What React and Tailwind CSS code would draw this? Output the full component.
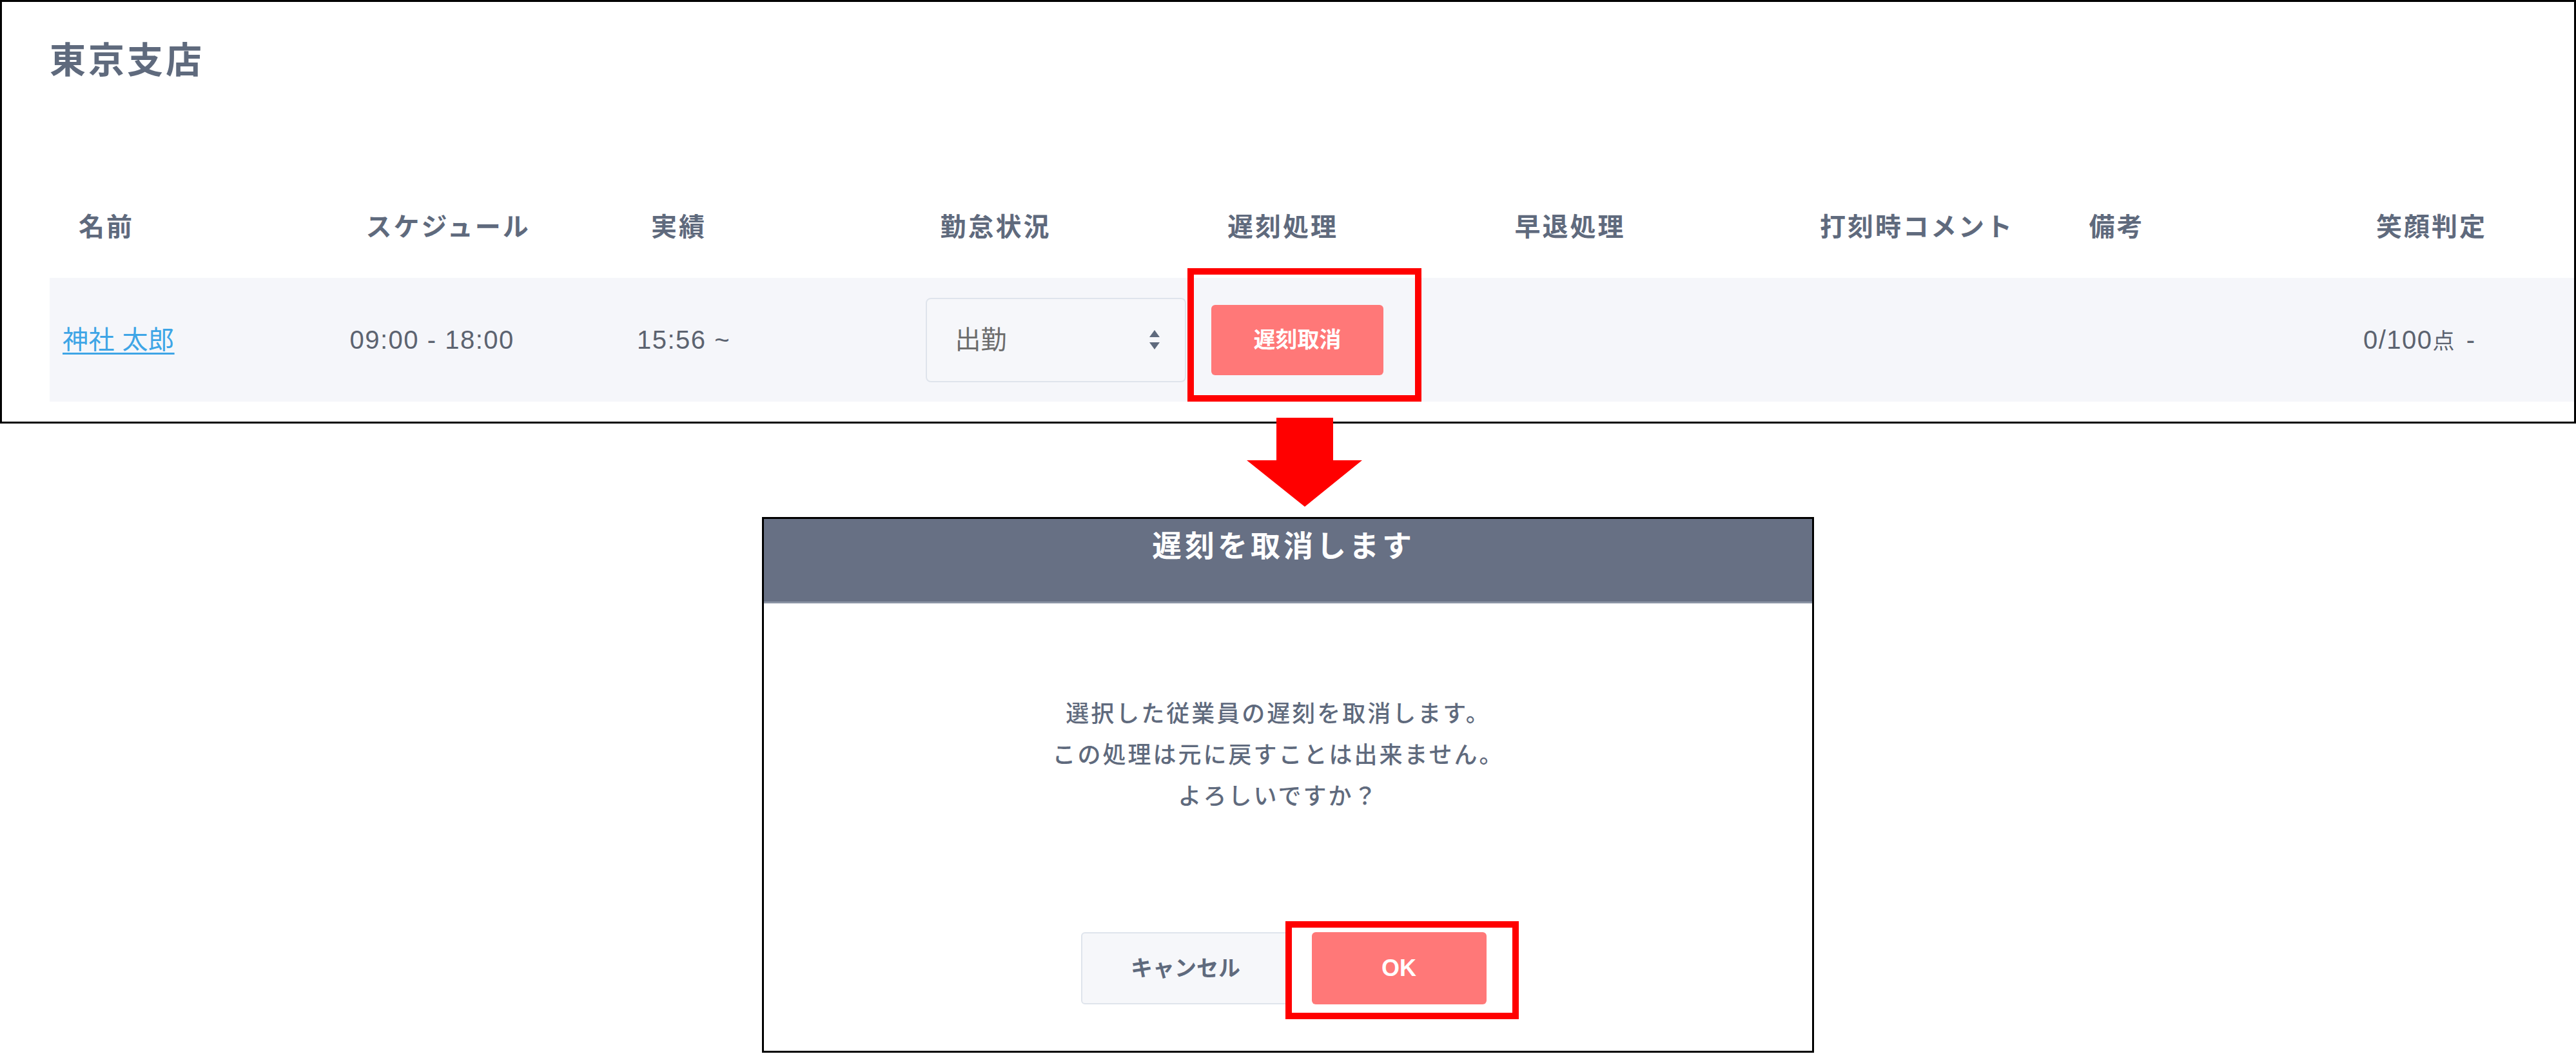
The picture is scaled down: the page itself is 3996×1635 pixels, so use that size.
export default function App() {
  const font = "font-['Liberation_Sans','Noto_Sans_CJK_JP',sans-serif]";
  const headers = [
    { t: "名前", c: "pl-[25px]" },
    { t: "スケジュール", c: "pl-[25px]" },
    { t: "実績", c: "pl-[22px]" },
    { t: "勤怠状況", c: "pl-[25px]" },
    { t: "遅刻処理", c: "pl-[25px]" },
    { t: "早退処理", c: "pl-[25px]" },
    { t: "打刻時コメント", c: "pl-[53px]" },
    { t: "備考", c: "pl-[25px]" },
    { t: "笑顔判定", c: "pl-[25px]" },
  ];
  return (
    <div className={`relative w-[3996px] h-[1635px] bg-white overflow-hidden ${font}`}>
      {/* Top panel */}
      <div className="h-[657px] border-[3px] border-black bg-white flex flex-col pl-[74px]">
        <div className="mt-[63px] h-[56px] leading-[56px] text-[56px] font-bold tracking-[4px] text-[#5f6a7d]">
          東京支店
        </div>
        <div className="mt-[200px] h-[60px] grid grid-cols-[repeat(8,445.5px)_1fr] items-center pl-[20px] text-[40px] leading-[60px] font-bold tracking-[3px] text-[#5f6a7d]">
          {headers.map((h) => (
            <div key={h.t} className={`${h.c} whitespace-nowrap`}>{h.t}</div>
          ))}
        </div>
        <div className="mt-[49px] h-[192px] bg-[#f5f6fa] grid grid-cols-[repeat(8,445.5px)_1fr] items-center pl-[20px] text-[40px]">
          <div>
            <a className="text-[#3ea5e6] underline underline-offset-[6px] decoration-[3px] tracking-[0.5px] leading-[48px]">神社 太郎</a>
          </div>
          <div className="text-[#5c6370] tracking-[1.5px]">09:00 - 18:00</div>
          <div className="text-[#5c6370] tracking-[1.5px]">15:56 ~</div>
          <div className="pl-[2px]">
            <div className="w-[404px] h-[131px] rounded-[8px] border-2 border-[#dfe4ec] bg-[#f6f7fa] flex items-center justify-between pl-[44px] pr-[36px]">
              <span className="text-[#6c6c6c] text-[40px]">出勤</span>
              <svg width="22" height="30" viewBox="0 0 22 30">
                <polygon points="3,11 11,0 19,11" fill="#5f6a7d" />
                <polygon points="3,19 19,19 11,30" fill="#5f6a7d" />
              </svg>
            </div>
          </div>
          <div>
            <div className="w-[267px] h-[109px] rounded-[6px] bg-[#ff7878] flex items-center justify-center text-white font-bold text-[34px]">
              遅刻取消
            </div>
          </div>
          <div></div>
          <div></div>
          <div></div>
          <div className="pl-[5px] text-[#5c6370] tracking-[1.5px] whitespace-nowrap">
            0/100<span className="text-[34px] font-normal">点</span> <span className="ml-[4px]">-</span>
          </div>
        </div>
      </div>

      {/* Dialog */}
      <div className="mt-[145px] ml-[1182px] w-[1632px] h-[831px] border-[3px] border-black bg-white flex flex-col">
        <div className="h-[131px] bg-[#677084] border-b-[3px] border-[#8a93a4] flex justify-center pr-[14px]">
          <div className="mt-[12px] h-[60px] leading-[60px] text-[46px] font-bold tracking-[5px] text-white">
            遅刻を取消します
          </div>
        </div>
        <div className="pt-[140px] flex flex-col items-center pr-[30px] text-[36px] leading-[64px] tracking-[3px] font-medium text-[#5f6a7d]">
          <div>選択した従業員の遅刻を取消します。</div>
          <div>この処理は元に戻すことは出来ません。</div>
          <div>よろしいですか？</div>
        </div>
        <div className="mt-[178px] flex justify-center gap-[33px] pr-[14px]">
          <div className="w-[325px] h-[112px] rounded-[6px] border-2 border-[#dfe4ec] bg-[#f6f7fa] flex items-center justify-center text-[34px] font-bold text-[#5f6a7d]">
            キャンセル
          </div>
          <div className="w-[271px] h-[112px] rounded-[6px] bg-[#ff7878] flex items-center justify-center text-[36px] font-bold text-white">
            OK
          </div>
        </div>
      </div>

      {/* Annotations */}
      <div className="absolute left-[1842px] top-[416px] w-[363px] h-[207px] border-[10px] border-[#ff0000]" />
      <div className="absolute left-[1994px] top-[1429px] w-[362px] h-[152px] border-[10px] border-[#ff0000]" />
      <svg className="absolute left-[1934px] top-[648px]" width="179" height="138" viewBox="0 0 179 138">
        <polygon points="46,0 134,0 134,66 179,66 90,138 0,66 46,66" fill="#ff0000" />
      </svg>
    </div>
  );
}
